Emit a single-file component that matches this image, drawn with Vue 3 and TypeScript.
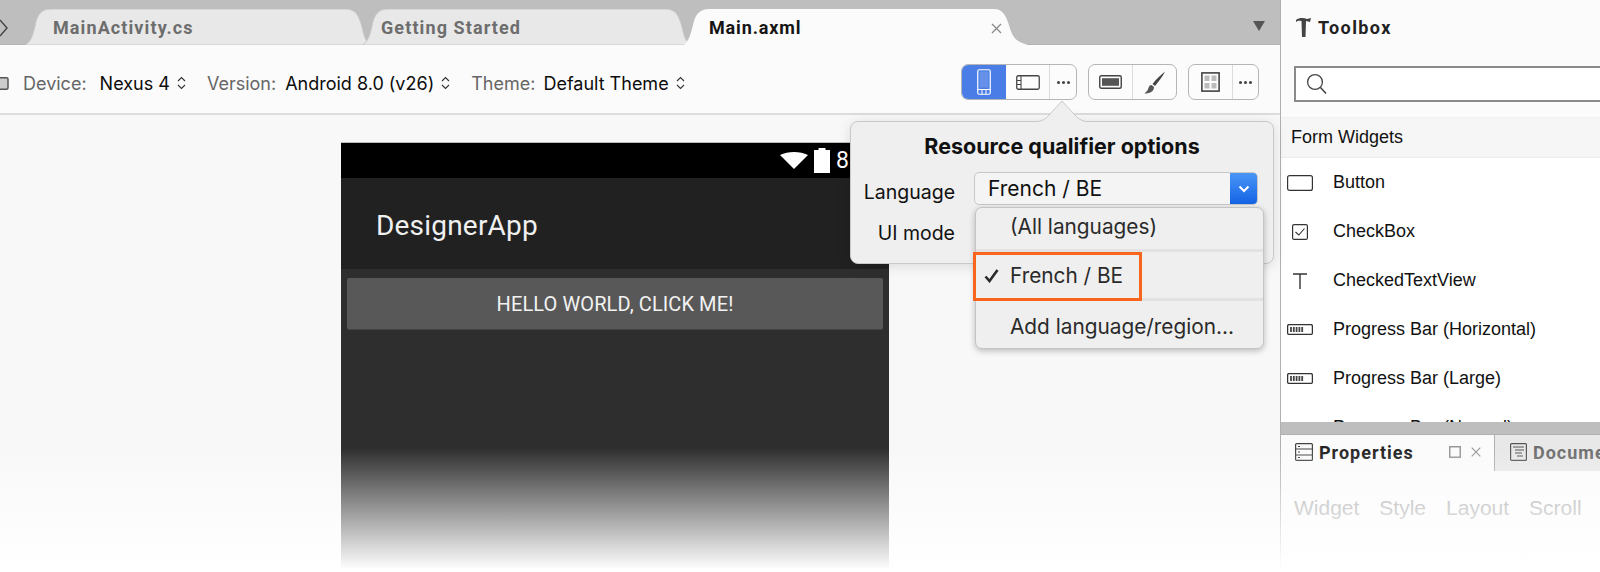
<script setup lang="ts">
interface Tab { label: string; cls: string; width: number; path: string }
function tabPath(w: number): string {
  return `M0 36 C6 33 8 26 10 17 C12 6 16 0 26 0 H${w - 26} C${w - 14} 0 ${w - 12} 8 ${w - 9} 18 C${w - 7} 28 ${w - 5} 33 ${w} 36 Z`
}
const tabs: Tab[] = [
  { label: 'MainActivity.cs', cls: 'tab-one', width: 346, path: tabPath(346) },
  { label: 'Getting Started', cls: 'tab-two', width: 329, path: tabPath(329) },
]
const widgets: { name: string; icon: string }[] = [
  { name: 'Button', icon: 'button' },
  { name: 'CheckBox', icon: 'check' },
  { name: 'CheckedTextView', icon: 'text' },
  { name: 'Progress Bar (Horizontal)', icon: 'bar' },
  { name: 'Progress Bar (Large)', icon: 'bar' },
  { name: 'Progress Bar (Normal)', icon: 'bar' },
]
const selectors = [
  { label: 'Device:', value: 'Nexus 4' },
  { label: 'Version:', value: 'Android 8.0 (v26)' },
  { label: 'Theme:', value: 'Default Theme' },
]
const subTabs = ['Widget', 'Style', 'Layout', 'Scroll']
</script>

<template>
  <div class="page">
    <main class="main">
      <header class="tabbar">
        <svg class="back" width="8" height="18" viewBox="0 0 8 18"><path d="M0 1 L7 9 L0 17" fill="none" stroke="#444" stroke-width="1.4" /></svg>
        <div v-for="t in tabs" :key="t.label" class="tab" :class="t.cls">
          <svg class="tab-shape" :width="t.width" height="36" :viewBox="`0 0 ${t.width} 36`">
            <path :d="t.path" fill="#e8e8e8" stroke="#c9c9c9" stroke-width="1" />
          </svg>
          <span class="tab-label">{{ t.label }}</span>
        </div>
        <div class="tab tab-active">
          <svg class="tab-shape" width="344" height="36" viewBox="0 0 344 36">
            <path d="M0 36 C5 32 7 24 9 16 C11 6 15 0 26 0 H310 C319 0 322 7 325 16 C328 27 331 33 344 36 Z" fill="#fbfbfb" />
          </svg>
          <span class="tab-label">Main.axml</span>
          <svg class="tab-close" width="11" height="11" viewBox="0 0 11 11"><path d="M1 1 L10 10 M10 1 L1 10" stroke="#8a8a8a" stroke-width="1.3" /></svg>
        </div>
        <svg class="tab-menu" width="12" height="10" viewBox="0 0 12 10"><path d="M0 0 H12 L6 10 Z" fill="#555" /></svg>
      </header>

      <div class="toolbar">
        <svg class="device-stub" width="9" height="13" viewBox="0 0 9 13"><rect x="-3" y=".75" width="11" height="11.5" rx="1.5" fill="#ccc" stroke="#555" stroke-width="1.5" /></svg>
        <div v-for="s in selectors" :key="s.label" class="selector">
          <span class="sel-label">{{ s.label }}</span>
          <span class="sel-value">{{ s.value }}</span>
          <svg width="9" height="14" viewBox="0 0 9 14"><path d="M1 5 L4.5 1.5 L8 5 M1 9 L4.5 12.5 L8 9" fill="none" stroke="#333" stroke-width="1.1" /></svg>
        </div>
        <div class="spacer"></div>
        <div class="group group-a">
          <button class="seg seg-active seg-phone">
            <svg width="14" height="26" viewBox="0 0 14 26"><rect x=".75" y=".75" width="12.5" height="24.5" rx="1.5" fill="none" stroke="#fff" stroke-width="1.2" /><rect x="2.5" y="2.5" width="9" height="16" fill="#fff" fill-opacity=".15" /><path d="M1 20.5 H13 M5 21 V25 M9 21 V25" stroke="#fff" stroke-width="1" /></svg>
          </button>
          <button class="seg seg-land">
            <svg width="24" height="15" viewBox="0 0 24 15"><rect x=".75" y=".75" width="22.5" height="13.5" rx="1.5" fill="none" stroke="#444" stroke-width="1.3" /><path d="M5 1 V14 M1 5.5 H5 M1 9.5 H5" stroke="#444" stroke-width="1.1" /></svg>
          </button>
          <button class="seg seg-more"><span class="dots"><i></i><i></i><i></i></span></button>
        </div>
        <div class="group group-b">
          <button class="seg seg-land">
            <svg width="23" height="14" viewBox="0 0 23 14"><rect x=".75" y=".75" width="21.5" height="12.5" rx="1.5" fill="none" stroke="#444" stroke-width="1.4" /><rect x="3" y="3.2" width="17" height="7.6" fill="#555" /></svg>
          </button>
          <button class="seg seg-brush">
            <svg width="22" height="23" viewBox="0 0 22 23"><path d="M21 .5 C17 4 12 8 8.5 13 L11 15 C15 10 19 5 21 .5 Z" fill="#444" /><path d="M7.5 14 C4 14.5 5 18 3 20 L.5 22.5 C5 22.5 10 21 10 16 Z" fill="#555" /></svg>
          </button>
        </div>
        <div class="group group-c">
          <button class="seg seg-grid">
            <svg width="19" height="20" viewBox="0 0 19 20"><rect x=".9" y=".9" width="17.2" height="18.2" fill="none" stroke="#444" stroke-width="1.6" /><rect x="3.5" y="3.5" width="5" height="5.5" fill="#bbb" /><rect x="10.5" y="3.5" width="5" height="5.5" fill="#bbb" /><rect x="3.5" y="11" width="5" height="5.5" fill="#bbb" /><rect x="10.5" y="11" width="5" height="5.5" fill="#bbb" /></svg>
          </button>
          <button class="seg seg-more2"><span class="dots"><i></i><i></i><i></i></span></button>
        </div>
      </div>

      <section class="canvas">
        <div class="phone">
          <div class="status">
            <svg width="28" height="17" viewBox="0 0 28 17"><path d="M0 3 C8 -1 20 -1 28 3 L14 17 Z" fill="#fff" /></svg>
            <svg width="16" height="25" viewBox="0 0 16 25"><path d="M4.5 0 H11.5 V2 H16 V25 H0 V2 H4.5 Z" fill="#fff" /></svg>
            <span class="clock">8:00</span>
          </div>
          <div class="appbar">DesignerApp</div>
          <div class="phone-body">
            <div class="phone-btn">HELLO WORLD, CLICK ME!</div>
          </div>
        </div>
      </section>

      <div class="popover">
        <svg class="pop-arrow" width="62" height="21" viewBox="0 0 62 21"><path d="M0 21 C10 21 14 19 19 13 L31 0 L43 13 C48 19 52 21 62 21" fill="#efefef" stroke="#c9c9c9" stroke-width="1" /></svg>
        <h2 class="pop-title">Resource qualifier options</h2>
        <div class="pop-grid">
          <span class="pop-label">Language</span>
          <div class="select">
            <span class="select-value">French / BE</span>
            <span class="select-btn"><svg width="12" height="8" viewBox="0 0 12 8"><path d="M1.5 1.5 L6 6 L10.5 1.5" fill="none" stroke="#fff" stroke-width="2" /></svg></span>
          </div>
          <span class="pop-label">UI mode</span>
          <span></span>
        </div>
      </div>

      <div class="menu">
        <div class="menu-item menu-first">(All languages)</div>
        <div class="menu-item menu-checked">
          <svg class="tick" width="15" height="14" viewBox="0 0 15 14"><path d="M1.5 7.5 L5.5 12 L13.5 1" fill="none" stroke="#2a2a2a" stroke-width="2.6" /></svg>
          French / BE
        </div>
        <div class="menu-item menu-last">Add language/region...</div>
        <div class="highlight"></div>
      </div>
    </main>

    <aside class="side">
      <div class="side-head">
        <svg width="17" height="21" viewBox="0 0 17 21"><path d="M1 3 C4 .5 9 .5 12 2 L16 1 L15 5 L11 4 L10.5 20 H7 L6.5 4 C4.5 3.5 2.5 3.5 1 5 Z" fill="#444" /></svg>
        <span>Toolbox</span>
      </div>
      <div class="search">
        <svg width="21" height="22" viewBox="0 0 21 22"><circle cx="9" cy="9" r="7.4" fill="none" stroke="#444" stroke-width="1.3" /><path d="M14.5 14.5 L20 20.5" stroke="#444" stroke-width="1.6" /></svg>
      </div>
      <div class="section-title">Form Widgets</div>
      <ul class="widgets">
        <li v-for="w in widgets" :key="w.name" class="widget">
          <span class="widget-icon">
            <svg v-if="w.icon === 'button'" width="26" height="16" viewBox="0 0 26 16"><rect x=".6" y=".6" width="24.8" height="14.8" rx="2" fill="none" stroke="#333" stroke-width="1.2" /></svg>
            <svg v-else-if="w.icon === 'check'" width="16" height="16" viewBox="0 0 16 16"><rect x=".6" y=".6" width="14.8" height="14.8" rx="1.5" fill="none" stroke="#333" stroke-width="1.2" /><path d="M3.5 8 L6.8 11 L12.5 4.5" fill="none" stroke="#333" stroke-width="1.1" /></svg>
            <svg v-else-if="w.icon === 'text'" width="14" height="16" viewBox="0 0 14 16"><path d="M0 1 H14 M7 1 V16" stroke="#333" stroke-width="1.4" fill="none" /></svg>
            <svg v-else width="26" height="11" viewBox="0 0 26 11"><rect x=".6" y=".6" width="24.8" height="9.8" rx="1.5" fill="none" stroke="#333" stroke-width="1.3" /><path d="M4 3 V8 M6.8 3 V8 M9.6 3 V8 M12.4 3 V8 M15.2 3 V8" stroke="#444" stroke-width="1.8" /></svg>
          </span>
          <span>{{ w.name }}</span>
        </li>
      </ul>
      <div class="splitter"></div>
      <div class="dock-tabs">
        <div class="dock-tab dock-active">
          <svg width="18" height="18" viewBox="0 0 18 18"><rect x=".6" y=".6" width="16.8" height="16.8" rx="1" fill="none" stroke="#444" stroke-width="1.2" /><path d="M1 6 H17 M1 12 H17 M3 3.5 H5 M3 9 H5 M3 14.5 H5" stroke="#444" stroke-width="1" /></svg>
          <span class="dock-name">Properties</span>
          <svg class="dock-pin" width="12" height="12" viewBox="0 0 12 12"><rect x=".75" y=".75" width="10.5" height="10.5" fill="none" stroke="#999" stroke-width="1.5" /></svg>
          <svg class="dock-x" width="10" height="10" viewBox="0 0 10 10"><path d="M.7 .7 L9.3 9.3 M9.3 .7 L.7 9.3" stroke="#999" stroke-width="1.2" /></svg>
        </div>
        <div class="dock-tab dock-other">
          <svg width="17" height="18" viewBox="0 0 17 18"><rect x=".6" y=".6" width="15.8" height="16.8" rx="1" fill="none" stroke="#555" stroke-width="1.2" /><path d="M3 4 H14 M5 7 H14 M5 10 H12 M7 13 H13" stroke="#555" stroke-width="1" /></svg>
          <span class="dock-name">Document Outline</span>
        </div>
      </div>
      <nav class="subtabs">
        <span v-for="s in subTabs" :key="s">{{ s }}</span>
      </nav>
    </aside>
    <div class="fade"></div>
  </div>
</template>

<style>
html, body { margin: 0; background: #fff; }
</style>

<style scoped>
.page {
  position: relative;
  display: flex;
  width: 1600px;
  height: 572px;
  overflow: hidden;
  font-family: "Liberation Sans", Arial, sans-serif;
  color: #111;
}
.main {
  position: relative;
  width: 1280px;
  display: flex;
  flex-direction: column;
  flex: none;
}
.tabbar {
  height: 45px;
  flex: none;
  background: #bebebe;
  display: flex;
  align-items: flex-end;
  padding-left: 25px;
  box-sizing: border-box;
  position: relative;
  border-bottom: 1px solid #b4b4b4;
}
.back { position: absolute; left: 0; top: 19px; }
.tab { position: relative; height: 36px; flex: none; margin-bottom: -1px; }
.tab-one { width: 346px; }
.tab-two { width: 329px; margin-left: -9px; }
.tab-active { width: 344px; margin-left: -7px; }
.tab-shape { position: absolute; left: 0; top: 0; }
.tab-label {
  position: relative;
  display: block;
  padding-left: 28px;
  line-height: 37px;
  font-family: Roboto, sans-serif;
  font-weight: 700;
  font-size: 18px;
  letter-spacing: 1.1px;
  color: #6d6d6d;
}
.tab-two .tab-label { padding-left: 19px; }
.tab-active .tab-label { color: #151515; padding-left: 25px; letter-spacing: .85px; }
.tab-close { position: absolute; left: 307px; top: 14px; }
.tab-menu { position: absolute; left: 1253px; top: 21px; }

.toolbar {
  height: 70px;
  flex: none;
  box-sizing: border-box;
  background: #fbfbfb;
  border-bottom: 2px solid #dcdcdc;
  display: flex;
  align-items: center;
  padding: 6px 21px 0 0;
}
.device-stub { margin: 2px 14px 0 0; }
.selector {
  display: flex;
  align-items: center;
  margin: 2px 21px 0 0;
  font-family: "Inter", sans-serif;
  font-size: 18px;
}
.sel-label { color: #666; margin-right: 9px; }
.selector:nth-of-type(1) .sel-label { margin-right: 13px; }
.selector:nth-of-type(3) .sel-label { margin-right: 8px; }
.sel-value { color: #0c0c0c; margin-right: 7px; }
.spacer { flex: 1; }
.group {
  display: flex;
  height: 36px;
  box-sizing: border-box;
  border: 1.5px solid #b5b5b5;
  border-radius: 7px;
  background: #fcfcfc;
  overflow: hidden;
  flex: none;
}
.group-a { width: 116px; margin-right: 11px; }
.group-b { width: 89px; margin-right: 11px; }
.group-c { width: 71px; }
.seg {
  appearance: none;
  border: 0;
  padding: 0;
  background: transparent;
  display: flex;
  align-items: center;
  justify-content: center;
  border-right: 1.5px solid #dcdcdc;
  flex: 1;
}
.seg:last-child { border-right: 0; }
.seg-active { background: #4a7ee6; }
.seg-phone { flex: 0 0 44px; border-right: 0; }
.group-a .seg-land { flex: 0 0 44px; }
.group-b .seg-land { flex: 0 0 44px; }
.group-c .seg-grid { flex: 0 0 44px; }
.dots { display: flex; gap: 2px; }
.dots i { width: 3px; height: 3px; border-radius: 50%; background: #444; display: block; }

.canvas {
  flex: 1;
  min-height: 0;
  background: #f8f8f8;
  padding: 27px 0 0 341px;
  overflow: hidden;
}
.phone {
  width: 548px;
  height: 432px;
  display: flex;
  flex-direction: column;
  border-top: 1px solid #bdbdbd;
}
.status {
  height: 35px;
  flex: none;
  background: #000;
  display: flex;
  align-items: center;
  padding-left: 439px;
  gap: 6px;
  color: #fff;
  font-family: Roboto, sans-serif;
  font-size: 23px;
  white-space: nowrap;
}
.appbar {
  height: 91px;
  flex: none;
  background: #212121;
  color: #f0f0f0;
  font-family: Roboto, sans-serif;
  font-size: 28px;
  letter-spacing: .2px;
  display: flex;
  align-items: center;
  padding: 3px 0 0 35px;
  box-sizing: border-box;
}
.phone-body {
  flex: 1;
  background: #2e2e2e;
  padding: 9px 6px 0;
}
.phone-btn {
  height: 52px;
  background: #585858;
  border-radius: 2px;
  border-bottom: 1px solid #444;
  box-sizing: border-box;
  color: #f2f2f2;
  font-family: Roboto, sans-serif;
  font-size: 20px;
  letter-spacing: .1px;
  text-align: center;
  line-height: 53px;
}

.popover {
  position: absolute;
  left: 850px;
  top: 121px;
  width: 424px;
  height: 143px;
  box-sizing: border-box;
  background: #efefef;
  border: 1px solid #c9c9c9;
  border-radius: 8px;
  box-shadow: 0 2px 14px rgba(0, 0, 0, .12);
}
.pop-arrow { position: absolute; left: 180px; top: -21px; }
.pop-title {
  margin: 0;
  font-family: "Inter", sans-serif;
  font-weight: 700;
  font-size: 21.5px;
  line-height: 24px;
  padding-top: 12px;
  text-align: center;
}
.pop-grid {
  display: grid;
  grid-template-columns: 104px 284px;
  column-gap: 19px;
  grid-auto-rows: 41px;
  margin-top: 14px;
  align-items: start;
  font-family: "Inter", sans-serif;
  font-size: 19.5px;
}
.pop-label { text-align: right; line-height: 40px; }
.select {
  height: 33px;
  box-sizing: border-box;
  border: 1px solid #c8c8c8;
  border-radius: 5px;
  background: #f4f4f4;
  display: flex;
  justify-content: space-between;
  overflow: hidden;
}
.select-value { padding-left: 13px; font-size: 21px; line-height: 31px; }
.select-btn {
  width: 27px;
  background: linear-gradient(#4a95f7, #1463e4);
  display: flex;
  align-items: center;
  justify-content: center;
}

.menu {
  position: absolute;
  left: 975px;
  top: 207px;
  width: 289px;
  height: 142px;
  box-sizing: border-box;
  background: #efefef;
  border: 1px solid #c4c4c4;
  border-radius: 7px;
  box-shadow: 0 2px 6px rgba(0, 0, 0, .25);
  display: grid;
  grid-template-rows: 44px 49px 1fr;
  font-family: "Inter", sans-serif;
  font-size: 20.8px;
  color: #2a2a2a;
}
.menu-item {
  display: flex;
  align-items: center;
  padding-left: 34px;
  border-bottom: 3px solid #e2e2e2;
  position: relative;
  box-sizing: border-box;
}
.menu-first { padding-bottom: 4px; }
.menu-last { border-bottom: 0; padding-top: 4px; }
.tick { position: absolute; left: 8px; top: 17px; }
.highlight {
  position: absolute;
  left: -3px;
  top: 44px;
  width: 169px;
  height: 49px;
  box-sizing: border-box;
  border: 3px solid #f8651c;
}

.side {
  flex: none;
  width: 320px;
  box-sizing: border-box;
  border-left: 1px solid #b0b0b0;
  background: #fbfbfb;
  display: flex;
  flex-direction: column;
  overflow: hidden;
}
.side-head {
  height: 55px;
  flex: none;
  display: flex;
  align-items: center;
  gap: 6px;
  padding-left: 14px;
  font-family: Roboto, sans-serif;
  font-weight: 700;
  font-size: 18px;
  letter-spacing: 1.4px;
  color: #222;
}
.search {
  height: 36px;
  flex: none;
  box-sizing: border-box;
  margin: 11px -20px 0 13px;
  border: 2px solid #8a8a8a;
  background: #fff;
  display: flex;
  align-items: center;
  padding-left: 10px;
}
.section-title {
  margin-top: 15px;
  height: 41px;
  flex: none;
  box-sizing: border-box;
  background: #f6f6f6;
  border-top: 1px solid #f0f0f0;
  border-bottom: 1px solid #ececec;
  padding-left: 10px;
  line-height: 38px;
  font-size: 18px;
}
.widgets {
  list-style: none;
  margin: 0;
  padding: 0;
  height: 264px;
  flex: none;
  overflow: hidden;
  background: #fff;
}
.widget {
  height: 49px;
  display: flex;
  align-items: center;
  font-size: 18px;
  color: #111;
}
.widget-icon {
  width: 38px;
  margin-right: 14px;
  flex: none;
  display: flex;
  justify-content: center;
}
.splitter { height: 12px; flex: none; background: #bebebe; }
.dock-tabs {
  height: 37px;
  flex: none;
  display: flex;
  border-top: 1px solid #b0b0b0;
  box-sizing: border-box;
}
.dock-tab {
  display: flex;
  align-items: center;
  height: 100%;
  font-family: Roboto, sans-serif;
  font-weight: 700;
  font-size: 18px;
  letter-spacing: 1px;
  gap: 6px;
  white-space: nowrap;
  box-sizing: border-box;
  padding-bottom: 2px;
}
.dock-active { width: 213px; padding-left: 14px; padding-right: 13px; color: #222; flex: none; }
.dock-other { flex: 1; background: #e8e8e8; border-left: 1px solid #b0b0b0; padding-left: 15px; color: #6d6d6d; }
.dock-pin { margin-left: auto; }
.dock-x { margin-left: 4px; }
.subtabs {
  display: flex;
  gap: 20px;
  padding: 25px 0 0 13px;
  font-size: 21px;
  color: #a8a8a8;
  white-space: nowrap;
}
.fade {
  position: absolute;
  left: 0;
  right: 0;
  top: 448px;
  bottom: 0;
  background: linear-gradient(rgba(255, 255, 255, 0), #fff 98%);
  pointer-events: none;
}
</style>
